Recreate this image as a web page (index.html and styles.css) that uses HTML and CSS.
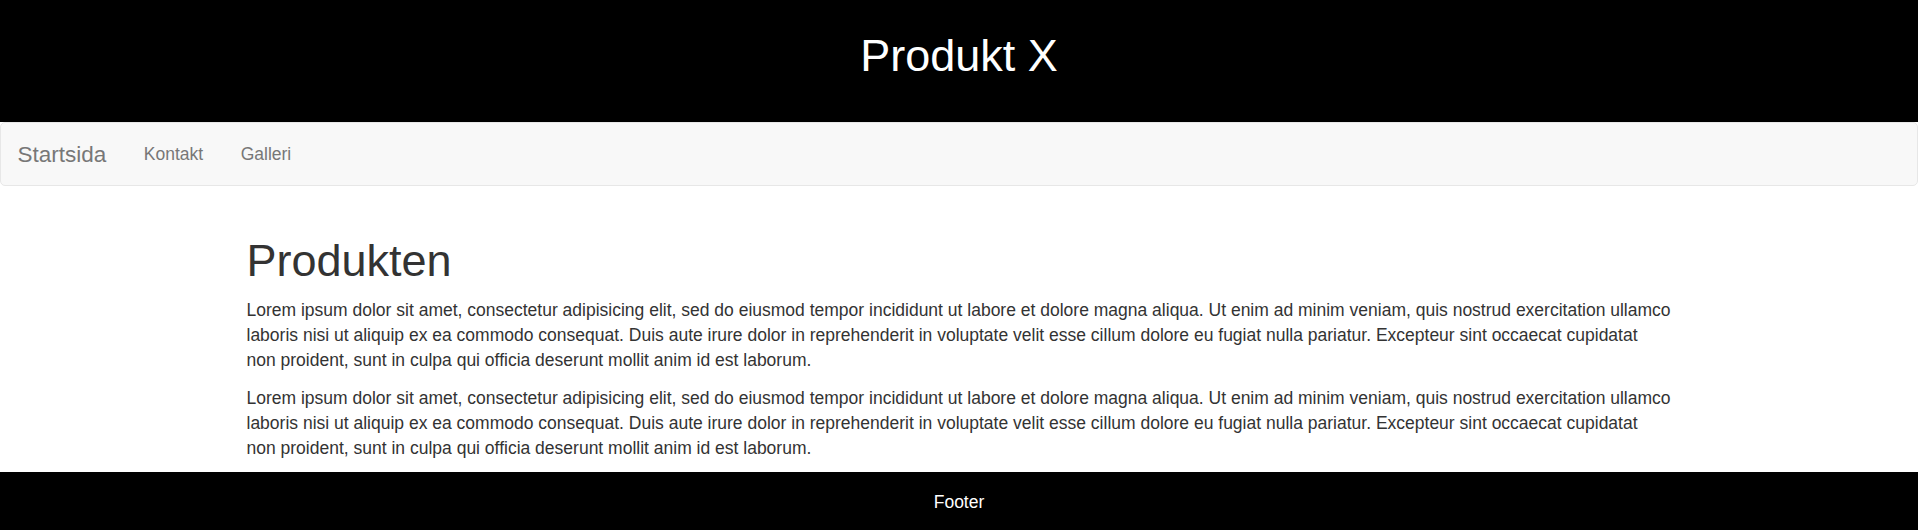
FILE: index.html
```html
<!DOCTYPE html>
<html lang="sv">
<head>
<meta charset="utf-8">
<title>Produkt X</title>
<link rel="stylesheet" href="styles.css">
</head>
<body>
<header class="site-header">
  <h1 class="site-title">Produkt X</h1>
</header>
<nav class="navbar">
  <a class="navbar-brand" href="#">Startsida</a>
  <ul class="nav-links">
    <li><a href="#">Kontakt</a></li>
    <li><a href="#">Galleri</a></li>
  </ul>
</nav>
<main class="container">
  <h1 class="page-title">Produkten</h1>
  <p>Lorem ipsum dolor sit amet, consectetur adipisicing elit, sed do eiusmod tempor incididunt ut labore et dolore magna aliqua. Ut enim ad minim veniam, quis nostrud exercitation ullamco laboris nisi ut aliquip ex ea commodo consequat. Duis aute irure dolor in reprehenderit in voluptate velit esse cillum dolore eu fugiat nulla pariatur. Excepteur sint occaecat cupidatat non proident, sunt in culpa qui officia deserunt mollit anim id est laborum.</p>
  <p>Lorem ipsum dolor sit amet, consectetur adipisicing elit, sed do eiusmod tempor incididunt ut labore et dolore magna aliqua. Ut enim ad minim veniam, quis nostrud exercitation ullamco laboris nisi ut aliquip ex ea commodo consequat. Duis aute irure dolor in reprehenderit in voluptate velit esse cillum dolore eu fugiat nulla pariatur. Excepteur sint occaecat cupidatat non proident, sunt in culpa qui officia deserunt mollit anim id est laborum.</p>
</main>
<footer class="site-footer">Footer</footer>
</body>
</html>
```

FILE: styles.css
```css
* { box-sizing: border-box; }
html, body { margin: 0; padding: 0; }
body {
  font-family: "Liberation Sans", Arial, Helvetica, sans-serif;
  font-size: 17.5px;
  line-height: 25px;
  color: #333;
  background: #fff;
}
.site-header {
  background: #000;
  height: 122px;
  padding-top: 31px;
  text-align: center;
}
.site-title {
  margin: 0;
  font-size: 45px;
  font-weight: 500;
  line-height: 49.5px;
  color: #fff;
}
.navbar {
  display: flex;
  align-items: stretch;
  height: 64px;
  background: #f8f8f8;
  border: 1.25px solid #e7e7e7;
  border-radius: 5px;
  margin-bottom: 25px;
}
.navbar-brand {
  font-size: 22.5px;
  line-height: 25px;
  padding: 18.75px 18.75px 18.75px 16.5px;
  color: #777;
  text-decoration: none;
}
.nav-links {
  display: flex;
  list-style: none;
  margin: 0;
  padding: 0;
}
.nav-links a {
  display: block;
  padding: 18.75px;
  line-height: 25px;
  color: #777;
  text-decoration: none;
}
.container {
  display: flow-root;
  width: 1462.5px;
  margin: 0 auto;
  padding: 0 18.75px;
}
.page-title {
  margin: 25px 0 12.5px;
  font-size: 45px;
  font-weight: 500;
  line-height: 49.5px;
  color: #333;
}
.container p {
  margin: 0 0 12.5px;
}
.container p:last-child {
  margin-bottom: 11.5px;
}
.site-footer {
  background: #000;
  color: #fff;
  text-align: center;
  padding: 18px 0 15px;
  line-height: 25px;
}
```
